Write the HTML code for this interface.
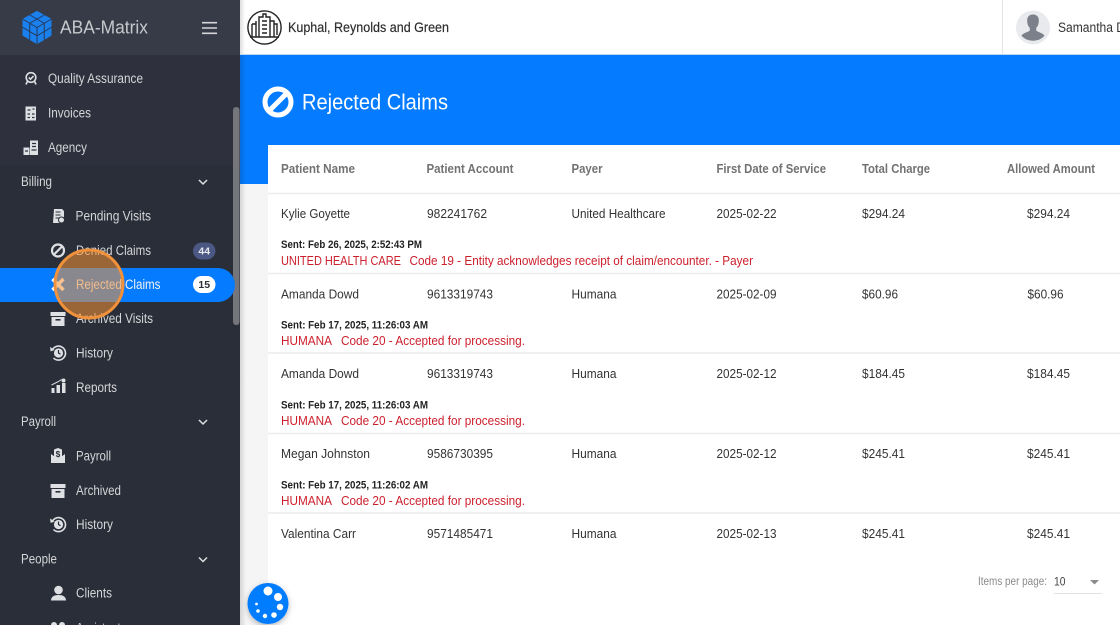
<!DOCTYPE html>
<html lang="en"><head><meta charset="utf-8"><title>Rejected Claims</title>
<style>
html,body{margin:0;padding:0;width:1120px;height:625px;overflow:hidden;background:#fff}
svg{display:block;font-family:"Liberation Sans",sans-serif;filter:blur(.3px)}
.s{font-size:13.5px;fill:#d4d5d8}
.h{font-size:13px;font-weight:bold;fill:#727272}
.c{font-size:13px;fill:#333}
.b{font-size:11px;font-weight:bold;fill:#222}
.r{font-size:13px;fill:#cc1f2c}
.l{stroke:#ececec;stroke-width:1.5}
.i{fill:#dfe0e3}
</style></head><body>
<svg width="1120" height="625" viewBox="0 0 1120 625" xmlns="http://www.w3.org/2000/svg">
<defs>
<linearGradient id="sh" x1="0" x2="1" y1="0" y2="0"><stop offset="0" stop-color="#000" stop-opacity=".13"/><stop offset="1" stop-color="#000" stop-opacity="0"/></linearGradient>
<filter id="fs" x="-30%" y="-30%" width="160%" height="160%"><feDropShadow dx="0" dy="2" stdDeviation="3" flood-color="#000" flood-opacity=".28"/></filter>
<g id="hist"><path d="M-6.5-2.5A7 7 0 1 1-5 5" fill="none" stroke="#dfe0e3" stroke-width="1.6"/><path d="M-8.5-6l.6 4.4 4-1.4z" fill="#dfe0e3"/><circle r="4.6" fill="#dfe0e3"/><path d="M0-3v3l2 1.2" fill="none" stroke="#2a2e39" stroke-width="1.2"/></g>
<g id="arch"><rect x="-7.5" y="-7" width="15" height="4" fill="#dfe0e3"/><rect x="-6.5" y="-2" width="13" height="9" fill="#dfe0e3"/><rect x="-2.5" y="0" width="5" height="1.6" fill="#2a2e39"/></g>
</defs>

<!-- main background -->
<rect x="240" width="880" height="625" fill="#f5f5f6"/>
<rect x="240" y="55" width="880" height="90" fill="#057bff"/>
<rect x="240" y="145" width="28" height="39" fill="#057bff"/>
<rect x="268" y="145" width="852" height="480" fill="#fff"/>
<rect x="240" width="6" height="625" fill="url(#sh)"/>

<!-- top bar -->
<rect x="240" width="880" height="55" fill="#fff"/>
<rect x="240" width="5" height="55" fill="url(#sh)"/>
<rect x="240" y="54" width="880" height="1" fill="#bcd6f2"/>
<rect x="1002" width="1" height="54" fill="#e2e3e5"/>
<g fill="none" stroke="#222">
<circle cx="264.5" cy="27.5" r="16.6" stroke-width="1.4"/>
<path d="M252 24v13M256 21v16M252 24h4M259 37V17h4v-3h3v3h4v20M262 21h5M262 25h5M262 29h5M262 33h5M270 21h4v16M274 24h3v11M250 37h29" stroke-width="1.4"/>
</g>
<text x="288" y="32" font-size="14" fill="#2e2e2e" stroke="#2e2e2e" stroke-width=".2" textLength="161" lengthAdjust="spacingAndGlyphs">Kuphal, Reynolds and Green</text>
<circle cx="1033" cy="27.5" r="17" fill="#e9eaee"/>
<path d="M1033 14.5c-4.2 0-6 2.8-5.8 6.400 .1 1.600.2 3 .8 4.400.5 1.200 1.200 2 1.800 2.600v2.600c-.9 1.300-6.800 2.500-8.300 5.100 2.900 3.400 7 5.100 11.500 5.100s8.600-1.700 11.500-5.100c-1.500-2.600-7.400-3.800-8.300-5.100v-2.600c.6-.6 1.300-1.400 1.800-2.600.6-1.400.7-2.800.8-4.400.2-3.600-1.600-6.400-5.800-6.400z" fill="#7b808a"/>
<text x="1058" y="32" font-size="13.5" fill="#333" textLength="67" lengthAdjust="spacingAndGlyphs">Samantha D</text>

<!-- page title -->
<circle cx="278" cy="102" r="13" fill="none" stroke="#fff" stroke-width="5"/>
<path d="M269 111l18-18" stroke="#fff" stroke-width="5"/>
<text x="302" y="109.500" font-size="22.500" fill="#fff" textLength="146" lengthAdjust="spacingAndGlyphs">Rejected Claims</text>

<!-- table header -->
<g class="h">
<text x="281" y="173" textLength="74" lengthAdjust="spacingAndGlyphs">Patient Name</text>
<text x="426.500" y="173" textLength="87" lengthAdjust="spacingAndGlyphs">Patient Account</text>
<text x="571.500" y="173" textLength="31" lengthAdjust="spacingAndGlyphs">Payer</text>
<text x="716.500" y="173" textLength="109.500" lengthAdjust="spacingAndGlyphs">First Date of Service</text>
<text x="862" y="173" textLength="68" lengthAdjust="spacingAndGlyphs">Total Charge</text>
<text x="1007" y="173" textLength="88" lengthAdjust="spacingAndGlyphs">Allowed Amount</text>
</g>
<path class="l" d="M268 193.500H1120M268 273.500H1120M268 353H1120M268 433.500H1120M268 513H1120"/>

<!-- row 1 -->
<g class="c">
<text x="281" y="218" textLength="69" lengthAdjust="spacingAndGlyphs">Kylie Goyette</text>
<text x="427" y="218" textLength="60" lengthAdjust="spacingAndGlyphs">982241762</text>
<text x="571.500" y="218" textLength="94" lengthAdjust="spacingAndGlyphs">United Healthcare</text>
<text x="716.500" y="218" textLength="60" lengthAdjust="spacingAndGlyphs">2025-02-22</text>
<text x="862" y="218" textLength="43" lengthAdjust="spacingAndGlyphs">$294.24</text>
<text x="1027" y="218" textLength="43" lengthAdjust="spacingAndGlyphs">$294.24</text>
</g>
<text class="b" x="281" y="248" textLength="141" lengthAdjust="spacingAndGlyphs">Sent: Feb 26, 2025, 2:52:43 PM</text>
<text class="r" x="281" y="265" textLength="120" lengthAdjust="spacingAndGlyphs">UNITED HEALTH CARE</text>
<text class="r" x="409.500" y="265" textLength="343.500" lengthAdjust="spacingAndGlyphs">Code 19 - Entity acknowledges receipt of claim/encounter. - Payer</text>

<!-- row 2 -->
<g class="c">
<text x="281" y="298.500" textLength="78" lengthAdjust="spacingAndGlyphs">Amanda Dowd</text>
<text x="427" y="298.500" textLength="66" lengthAdjust="spacingAndGlyphs">9613319743</text>
<text x="571.500" y="298.500" textLength="45" lengthAdjust="spacingAndGlyphs">Humana</text>
<text x="716.500" y="298.500" textLength="60" lengthAdjust="spacingAndGlyphs">2025-02-09</text>
<text x="862" y="298.500" textLength="36" lengthAdjust="spacingAndGlyphs">$60.96</text>
<text x="1027.500" y="298.500" textLength="36" lengthAdjust="spacingAndGlyphs">$60.96</text>
</g>
<text class="b" x="281" y="328.500" textLength="147" lengthAdjust="spacingAndGlyphs">Sent: Feb 17, 2025, 11:26:03 AM</text>
<text class="r" x="281" y="345" textLength="51" lengthAdjust="spacingAndGlyphs">HUMANA</text>
<text class="r" x="341" y="345" textLength="184" lengthAdjust="spacingAndGlyphs">Code 20 - Accepted for processing.</text>

<!-- row 3 -->
<g class="c">
<text x="281" y="378" textLength="78" lengthAdjust="spacingAndGlyphs">Amanda Dowd</text>
<text x="427" y="378" textLength="66" lengthAdjust="spacingAndGlyphs">9613319743</text>
<text x="571.500" y="378" textLength="45" lengthAdjust="spacingAndGlyphs">Humana</text>
<text x="716.500" y="378" textLength="60" lengthAdjust="spacingAndGlyphs">2025-02-12</text>
<text x="862" y="378" textLength="43" lengthAdjust="spacingAndGlyphs">$184.45</text>
<text x="1027" y="378" textLength="43" lengthAdjust="spacingAndGlyphs">$184.45</text>
</g>
<text class="b" x="281" y="408.500" textLength="147" lengthAdjust="spacingAndGlyphs">Sent: Feb 17, 2025, 11:26:03 AM</text>
<text class="r" x="281" y="425" textLength="51" lengthAdjust="spacingAndGlyphs">HUMANA</text>
<text class="r" x="341" y="425" textLength="184" lengthAdjust="spacingAndGlyphs">Code 20 - Accepted for processing.</text>

<!-- row 4 -->
<g class="c">
<text x="281" y="458" textLength="89" lengthAdjust="spacingAndGlyphs">Megan Johnston</text>
<text x="427" y="458" textLength="66" lengthAdjust="spacingAndGlyphs">9586730395</text>
<text x="571.500" y="458" textLength="45" lengthAdjust="spacingAndGlyphs">Humana</text>
<text x="716.500" y="458" textLength="60" lengthAdjust="spacingAndGlyphs">2025-02-12</text>
<text x="862" y="458" textLength="43" lengthAdjust="spacingAndGlyphs">$245.41</text>
<text x="1027" y="458" textLength="43" lengthAdjust="spacingAndGlyphs">$245.41</text>
</g>
<text class="b" x="281" y="488.500" textLength="147" lengthAdjust="spacingAndGlyphs">Sent: Feb 17, 2025, 11:26:02 AM</text>
<text class="r" x="281" y="505" textLength="51" lengthAdjust="spacingAndGlyphs">HUMANA</text>
<text class="r" x="341" y="505" textLength="184" lengthAdjust="spacingAndGlyphs">Code 20 - Accepted for processing.</text>

<!-- row 5 -->
<g class="c">
<text x="281" y="538" textLength="75" lengthAdjust="spacingAndGlyphs">Valentina Carr</text>
<text x="427" y="538" textLength="66" lengthAdjust="spacingAndGlyphs">9571485471</text>
<text x="571.500" y="538" textLength="45" lengthAdjust="spacingAndGlyphs">Humana</text>
<text x="716.500" y="538" textLength="60" lengthAdjust="spacingAndGlyphs">2025-02-13</text>
<text x="862" y="538" textLength="43" lengthAdjust="spacingAndGlyphs">$245.41</text>
<text x="1027" y="538" textLength="43" lengthAdjust="spacingAndGlyphs">$245.41</text>
</g>

<!-- paginator -->
<text x="978" y="585" font-size="11.500" fill="#8a8a8a" textLength="69" lengthAdjust="spacingAndGlyphs">Items per page:</text>
<text x="1054" y="585.500" font-size="12" fill="#444" textLength="11.500" lengthAdjust="spacingAndGlyphs">10</text>
<path d="M1090 580h9l-4.500 4.500z" fill="#8a8a8a"/>
<rect x="1054" y="593" width="48" height="1" fill="#e3e3e3"/>

<!-- sidebar -->
<rect width="240" height="625" fill="#2a2e39"/>
<rect y="55" width="240" height="110" fill="#2e313d"/>
<rect width="240" height="55" fill="#373b47"/>
<rect x="233" y="107" width="6.500" height="218" rx="3.200" fill="#74767c"/>

<!-- cube logo -->
<path d="M37 12l13.500 7.500v15.500L37 43l-13.500-8V19.500z" fill="#1a80ee" stroke="#1a80ee" stroke-width="2" stroke-linejoin="round"/>
<g fill="none" stroke="#27385a" stroke-width="1"><path d="M37 27.500L22.500 19M37 27.500L51.500 19M37 27.500V44M29.750 15L44.250 23.250M44.250 15L29.750 23.250M29.750 23.250V39.750M44.250 23.250V39.750M22.500 27.250L37 35.750L51.500 27.250"/></g>
<text x="60" y="33.500" font-size="18.500" fill="#c6c8cc" textLength="88" lengthAdjust="spacingAndGlyphs">ABA-Matrix</text>
<path d="M202 22.700h15M202 28h15M202 33.300h15" stroke="#d5d6d9" stroke-width="1.600"/>

<!-- top items -->
<g fill="none" stroke="#dfe0e3" stroke-width="1.600"><circle cx="31" cy="77.500" r="4.800"/><path d="M28.800 77.500l1.700 1.700 3-3.200M27.300 81.500l-1.300 3M34.700 81.500l1.300 3"/></g>
<text class="s" x="48" y="83" textLength="95" lengthAdjust="spacingAndGlyphs">Quality Assurance</text>
<rect x="25.500" y="106.500" width="10.500" height="14" class="i"/>
<path d="M27.500 110h3M27.500 114h2.500M32 114h2.500M27.500 117.500h2.500M32 117.500h2.500M32.500 109h2" stroke="#2e313d" stroke-width="1.300"/>
<text class="s" x="48" y="117.500" textLength="43" lengthAdjust="spacingAndGlyphs">Invoices</text>
<path d="M23.500 147.500h6v7.500h-6zM30 140.500h8v14.500h-8z" class="i"/>
<path d="M32 143.500h4M32 146.500h4M31.500 150h5M25 151h3" stroke="#2e313d" stroke-width="1.200"/>
<text class="s" x="48" y="152" textLength="39" lengthAdjust="spacingAndGlyphs">Agency</text>

<!-- groups -->
<text class="s" x="21" y="186" textLength="31" lengthAdjust="spacingAndGlyphs">Billing</text>
<text class="s" x="21" y="426" textLength="35" lengthAdjust="spacingAndGlyphs">Payroll</text>
<text class="s" x="21" y="563.500" textLength="36" lengthAdjust="spacingAndGlyphs">People</text>
<path d="M199 180l4 4 4-4M199 420l4 4 4-4M199 557.500l4 4 4-4" fill="none" stroke="#dfe0e3" stroke-width="1.500"/>

<!-- Pending -->
<path d="M54 209h8l2 2v6h-2.500v6H53z" class="i"/>
<path d="M55.500 212h5M55.500 215h5M55.500 218h4" stroke="#2a2e39" stroke-width="1"/>
<circle cx="61.500" cy="220" r="3" class="i" stroke="#2a2e39"/>
<text class="s" x="75.500" y="220.500" textLength="75.500" lengthAdjust="spacingAndGlyphs">Pending Visits</text>

<!-- Denied -->
<circle cx="58" cy="250.500" r="6" fill="none" stroke="#dfe0e3" stroke-width="2.200"/>
<path d="M54 254.500l8-8" stroke="#dfe0e3" stroke-width="2.200"/>
<text class="s" x="76" y="255" textLength="75" lengthAdjust="spacingAndGlyphs">Denied Claims</text>
<rect x="193" y="242.500" width="22.500" height="17" rx="8.500" fill="#4b5883"/>
<text x="204.250" y="254.500" font-size="10.500" font-weight="bold" fill="#e8e9ed" text-anchor="middle">44</text>

<!-- Rejected active -->
<path d="M0 268h218a17 17 0 0 1 0 34H0z" fill="#057bff"/>
<path d="M52.500 279l11 11M63.500 279l-11 11" stroke="#fff" stroke-width="3.500"/>
<text x="76" y="289" font-size="13.500" fill="#eef2f8" textLength="84.500" lengthAdjust="spacingAndGlyphs">Rejected Claims</text>
<rect x="193" y="276" width="22.500" height="17" rx="8.500" fill="#fff"/>
<text x="204.250" y="288" font-size="10.500" font-weight="bold" fill="#2a2e39" text-anchor="middle">15</text>

<!-- Archived -->
<use href="#arch" x="58" y="319"/>
<text class="s" x="76" y="323" textLength="77" lengthAdjust="spacingAndGlyphs">Archived Visits</text>

<!-- orange highlight -->
<circle cx="89" cy="284" r="34" fill="#f39237" fill-opacity=".56" stroke="#f0913c" stroke-width="3"/>

<use href="#hist" x="58.500" y="353"/>
<text class="s" x="76" y="357.500" textLength="37" lengthAdjust="spacingAndGlyphs">History</text>
<path d="M51.500 393h3v-5h-3zM56.500 393h3.500v-8h-3.500zM62 393h3.500v-10H62z" class="i"/>
<path d="M51.500 385l7-3.500 3-2" stroke="#dfe0e3" fill="none"/><circle cx="63.500" cy="380.500" r="2" class="i"/>
<text class="s" x="76" y="392" textLength="41" lengthAdjust="spacingAndGlyphs">Reports</text>

<path d="M54 449.500l4-1.500 4 1.500v7l-4 2.500-4-2.500zM51 454l7 5 7-5v9H51z" class="i"/>
<text x="58" y="457" font-size="8" font-weight="bold" fill="#2a2e39" text-anchor="middle">$</text>
<text class="s" x="76" y="460.500" textLength="35" lengthAdjust="spacingAndGlyphs">Payroll</text>

<use href="#arch" x="58" y="491"/>
<text class="s" x="76" y="495" textLength="45" lengthAdjust="spacingAndGlyphs">Archived</text>

<use href="#hist" x="58.500" y="524.500"/>
<text class="s" x="76" y="529" textLength="37" lengthAdjust="spacingAndGlyphs">History</text>

<circle cx="58.500" cy="590" r="4.300" class="i"/>
<path d="M51 600.500c0-4 3.500-5.500 7.500-5.500s7.500 1.500 7.500 5.500z" class="i"/>
<text class="s" x="76" y="597.500" textLength="36" lengthAdjust="spacingAndGlyphs">Clients</text>

<circle cx="54" cy="625" r="3" class="i"/><circle cx="62" cy="625" r="3" class="i"/>
<text class="s" x="76" y="632.500" textLength="50" lengthAdjust="spacingAndGlyphs">Assistants</text>

<!-- floating button -->
<circle cx="268" cy="603.500" r="20.500" fill="#057bff" filter="url(#fs)"/>
<g fill="#fff"><circle cx="268" cy="591" r="4.500"/><circle cx="278" cy="597" r="4"/><circle cx="280" cy="607" r="3.200"/><circle cx="274" cy="615" r="2.800"/><circle cx="265" cy="616" r="2.200"/><circle cx="258" cy="611" r="1.800"/><circle cx="256.500" cy="604" r="1.400"/></g>
</svg>
</body></html>
